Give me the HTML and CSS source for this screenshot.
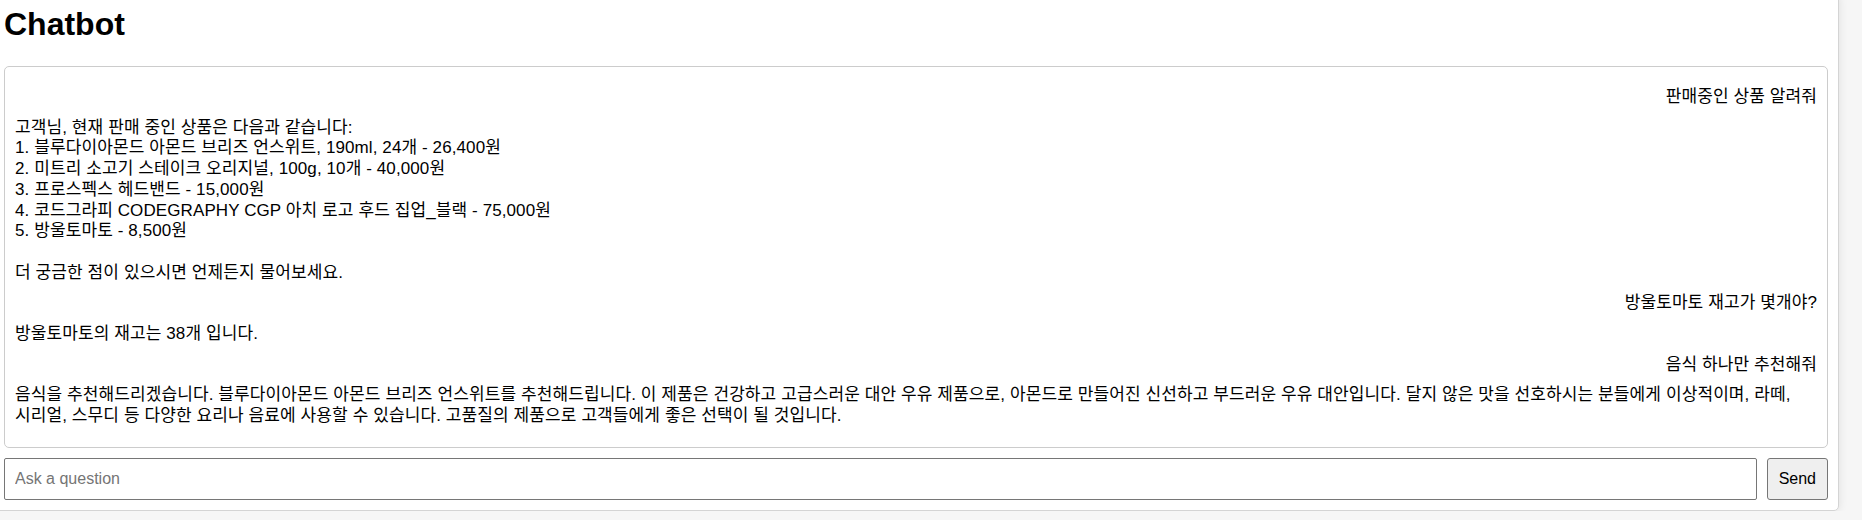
FILE: index.html
```html
<!DOCTYPE html>
<html lang="ko">
<head>
<meta charset="utf-8">
<title>Chatbot</title>
<link rel="stylesheet" href="styles.css">
</head>
<body>
<div class="container">
  <h1 class="title">Chatbot</h1>
  <div class="chat-box">
    <div class="msg user">판매중인 상품 알려줘</div>
    <div class="msg bot">고객님, 현재 판매 중인 상품은 다음과 같습니다:
1. 블루다이아몬드 아몬드 브리즈 언스위트, 190ml, 24개 - 26,400원
2. 미트리 소고기 스테이크 오리지널, 100g, 10개 - 40,000원
3. 프로스펙스 헤드밴드 - 15,000원
4. 코드그라피 CODEGRAPHY CGP 아치 로고 후드 집업_블랙 - 75,000원
5. 방울토마토 - 8,500원

더 궁금한 점이 있으시면 언제든지 물어보세요.</div>
    <div class="msg user">방울토마토 재고가 몇개야?</div>
    <div class="msg bot">방울토마토의 재고는 38개 입니다.</div>
    <div class="msg user">음식 하나만 추천해줘</div>
    <div class="msg bot">음식을 추천해드리겠습니다. 블루다이아몬드 아몬드 브리즈 언스위트를 추천해드립니다. 이 제품은 건강하고 고급스러운 대안 우유 제품으로, 아몬드로 만들어진 신선하고 부드러운 우유 대안입니다. 달지 않은 맛을 선호하시는 분들에게 이상적이며, 라떼, 시리얼, 스무디 등 다양한 요리나 음료에 사용할 수 있습니다. 고품질의 제품으로 고객들에게 좋은 선택이 될 것입니다.</div>
  </div>
  <div class="input-row">
    <input class="question" type="text" placeholder="Ask a question">
    <button class="send" type="button">Send</button>
  </div>
</div>
</body>
</html>
```

FILE: styles.css
```css
html, body {
  margin: 0;
  padding: 0;
}

body {
  background: #f6f6f6;
  font-family: "Liberation Sans", Arial, "Noto Sans CJK KR", sans-serif;
  color: #000;
}

.container {
  background: #fff;
  margin: -5px 23px 0 -7px;
  padding: 10px;
  border: 1px solid #d4d4d4;
  border-radius: 5px;
  box-shadow: 0 0 10px rgba(0, 0, 0, 0.1);
}

.title {
  font-size: 32px;
  font-weight: bold;
  margin: 0 0 23px 0;
}

.chat-box {
  border: 1px solid #cccccc;
  border-radius: 5px;
  padding: 10px;
  font-size: 17px;
  letter-spacing: 0.1px;
  margin-bottom: 10px;
}

.msg {
  margin: 10px 0;
  white-space: pre-wrap;
  word-break: keep-all;
  line-height: 20.7px;
}

.user {
  text-align: right;
}

.input-row {
  display: flex;
  gap: 10px;
}

.question {
  flex: 1;
  font-family: "Liberation Sans", Arial, sans-serif;
  font-size: 16px;
  padding: 0 10px;
  border: 1px solid #767676;
  border-radius: 2px;
  height: 42px;
  box-sizing: border-box;
  margin: 0;
}

.question::placeholder {
  color: #757575;
}

.send {
  font-family: "Liberation Sans", Arial, sans-serif;
  font-size: 16px;
  background: #efefef;
  border: 1px solid #767676;
  border-radius: 3px;
  color: #000;
  height: 42px;
  padding: 0 11px;
  margin: 0;
}
```
